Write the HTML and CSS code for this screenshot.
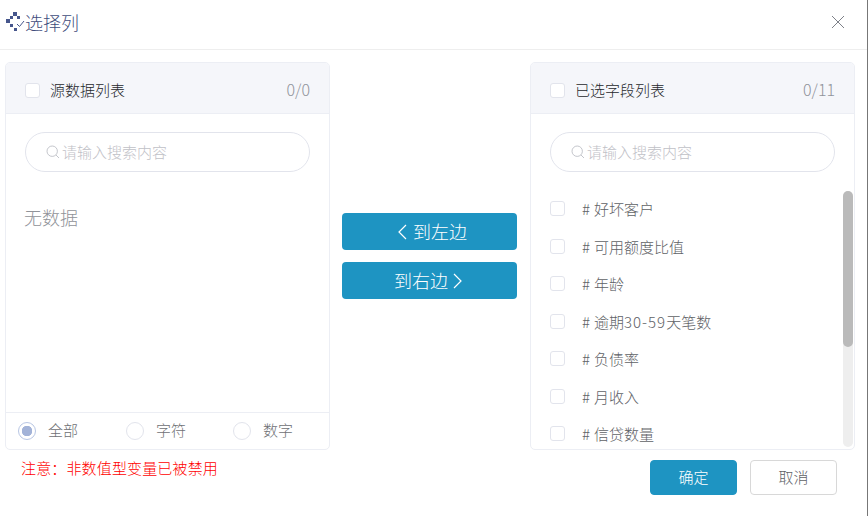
FILE: index.html
```html
<!DOCTYPE html>
<html lang="zh-CN">
<head>
<meta charset="utf-8">
<title>选择列</title>
<link rel="stylesheet" href="styles.css">
</head>
<body>
<div class="dialog">
  <header class="dialog-head">
    <h1 class="dialog-title">
      <svg class="title-icon" width="20" height="20" viewBox="6 14 20 20" aria-hidden="true">
        <g fill="#46568c" shape-rendering="crispEdges">
          <rect x="13" y="14" width="4" height="4"/>
          <rect x="6" y="21" width="4" height="4"/>
          <rect x="10" y="18" width="3" height="3"/>
          <rect x="17" y="18" width="3" height="3"/>
          <rect x="10" y="26" width="3" height="3"/>
          <rect x="14" y="30" width="3" height="3"/>
        </g>
        <path d="M17 26l2.500 2.500L24 23" fill="none" stroke="#46568c" stroke-width="1"/>
      </svg>
      <span class="title-text">选择列</span>
    </h1>
    <button class="close" aria-label="关闭">
      <svg width="14" height="14" viewBox="0 0 14 14"><path d="M1 1l12 12M13 1L1 13" stroke="#7d8088" stroke-width="1" fill="none"/></svg>
    </button>
  </header>

  <main class="transfer">
    <section class="panel">
      <div class="panel-head">
        <span class="check"></span>
        <span class="panel-name">源数据列表</span>
        <span class="count">0/0</span>
      </div>
      <div class="search-wrap">
        <div class="search">
          <svg width="14" height="14" viewBox="0 0 14 14"><circle cx="6.200" cy="6.200" r="5.200" fill="none" stroke="#c4c6cc"/><path d="M10 10l3 3" stroke="#c4c6cc"/></svg>
          <span class="search-text">请输入搜索内容</span>
        </div>
      </div>
      <div class="empty">无数据</div>
      <div class="radios">
        <label class="radio-item"><span class="radio on"></span><span class="radio-text">全部</span></label>
        <label class="radio-item"><span class="radio"></span><span class="radio-text">字符</span></label>
        <label class="radio-item"><span class="radio"></span><span class="radio-text">数字</span></label>
      </div>
    </section>

    <div class="actions">
      <button class="move to-left">
        <svg width="10" height="16" viewBox="0 0 10 16"><path d="M8 1L1 8l7 7" fill="none" stroke="#fff" stroke-width="1.200"/></svg>
        <span>到左边</span>
      </button>
      <button class="move to-right">
        <span>到右边</span>
        <svg width="10" height="16" viewBox="0 0 10 16"><path d="M1 1l7 7-7 7" fill="none" stroke="#fff" stroke-width="1.200"/></svg>
      </button>
    </div>

    <section class="panel">
      <div class="panel-head">
        <span class="check"></span>
        <span class="panel-name">已选字段列表</span>
        <span class="count">0/11</span>
      </div>
      <div class="search-wrap">
        <div class="search">
          <svg width="14" height="14" viewBox="0 0 14 14"><circle cx="6.200" cy="6.200" r="5.200" fill="none" stroke="#c4c6cc"/><path d="M10 10l3 3" stroke="#c4c6cc"/></svg>
          <span class="search-text">请输入搜索内容</span>
        </div>
      </div>
      <ul class="fields">
        <li class="field"><span class="check"></span><span class="hash">#</span><span>好坏客户</span></li>
        <li class="field"><span class="check"></span><span class="hash">#</span><span>可用额度比值</span></li>
        <li class="field"><span class="check"></span><span class="hash">#</span><span>年龄</span></li>
        <li class="field"><span class="check"></span><span class="hash">#</span><span>逾期<span class="num">30-59</span>天笔数</span></li>
        <li class="field"><span class="check"></span><span class="hash">#</span><span>负债率</span></li>
        <li class="field"><span class="check"></span><span class="hash">#</span><span>月收入</span></li>
        <li class="field"><span class="check"></span><span class="hash">#</span><span>信贷数量</span></li>
      </ul>
      <div class="scroll-track"><div class="scroll-thumb"></div></div>
    </section>
  </main>

  <footer class="dialog-foot">
    <p class="note">注意：非数值型变量已被禁用</p>
    <div class="foot-buttons">
      <button class="btn primary">确定</button>
      <button class="btn">取消</button>
    </div>
  </footer>
</div>
</body>
</html>
```
FILE: styles.css
```css
* { box-sizing: border-box; }
html, body { margin: 0; height: 100%; background: #fff; }
body {
  font-family: "Noto Sans CJK SC", "Liberation Sans", sans-serif;
  font-weight: 300;
  color: #606266;
  overflow: hidden;
}
.dialog {
  width: 868px;
  height: 516px;
  border-right: 1px solid #777;
  display: flex;
  flex-direction: column;
}
.dialog-head {
  height: 50px;
  border-bottom: 1px solid #eeeeee;
  display: flex;
  align-items: center;
  justify-content: space-between;
  padding: 0 22px 5px 6px;
  flex: none;
}
.dialog-title {
  margin: 0;
  display: flex;
  align-items: flex-start;
  font-size: 18px;
  line-height: 26px;
  font-weight: 300;
  color: #3f4d7c;
}
.title-icon { display: block; margin: 3px 0 0; }
.title-text { margin-left: -1px; }
.close {
  border: 0;
  background: none;
  padding: 0;
  width: 14px;
  height: 14px;
  display: block;
}
.close svg { display: block; }
.transfer {
  margin: 12px 0 0 5px;
  display: flex;
  height: 388px;
  flex: none;
}
.panel {
  position: relative;
  width: 325px;
  height: 388px;
  border: 1px solid #eceef4;
  border-radius: 5px;
  display: flex;
  flex-direction: column;
  overflow: hidden;
  flex: none;
}
.panel-head {
  height: 51px;
  background: #f5f6fa;
  border-bottom: 1px solid #eceef4;
  display: flex;
  align-items: center;
  padding: 2px 19px 0;
  font-size: 15px;
  flex: none;
}
.check {
  display: block;
  width: 15px;
  height: 15px;
  border: 1px solid #e2e4ec;
  border-radius: 3px;
  background: #fff;
  flex: none;
}
.panel-head .check { margin-top: 3px; }
.panel-name { margin-left: 10px; color: #26282c; }
.count { margin-left: auto; font-size: 16px; color: #90939a; }
.search-wrap { padding: 18px 19px 0; flex: none; }
.search {
  height: 40px;
  border: 1px solid #e2e4ec;
  border-radius: 20px;
  display: flex;
  align-items: center;
  padding-left: 20px;
  gap: 2px;
  font-size: 15px;
  color: #bfc1c7;
}
.search-text { margin-top: -2px; }
.empty {
  padding: 32px 0 0 18px;
  font-size: 18px;
  line-height: 26px;
  color: #909399;
  flex: 1;
}
.radios {
  height: 37px;
  border-top: 1px solid #eceef4;
  display: grid;
  grid-template-columns: 108px 107px auto;
  align-items: center;
  padding-left: 12px;
  font-size: 15px;
  color: #6e7074;
  flex: none;
}
.radio-item { display: flex; align-items: center; gap: 12px; }
.radio-text { margin-top: -3px; }
.radio {
  width: 18px;
  height: 18px;
  border: 1px solid #e2e4ec;
  border-radius: 50%;
  display: block;
  flex: none;
}
.radio.on {
  border-color: #b8c6e4;
  background: radial-gradient(circle, #a3b3d8 0 5px, #fff 5.500px);
}
.actions {
  width: 200px;
  flex: none;
  display: flex;
  flex-direction: column;
  justify-content: center;
  align-items: center;
  gap: 12px;
  padding-right: 1px;
}
.move {
  width: 175px;
  height: 37px;
  border: 0;
  border-radius: 4px;
  background: #1e94c2;
  color: #fff;
  font: inherit;
  font-size: 18px;
  display: flex;
  align-items: center;
  justify-content: center;
  gap: 5px;
  padding: 0 0 2px;
}
.move svg { margin-top: 2px; }
.to-left { padding-left: 6px; }
.to-right { padding-right: 2px; }
.fields {
  list-style: none;
  margin: 0;
  padding: 18px 0 0 19px;
  flex: 1;
  overflow: hidden;
}
.field {
  height: 37.500px;
  display: flex;
  align-items: center;
  font-size: 15px;
  color: #606266;
}
.hash { margin-left: 17px; margin-right: 4px; }
.num { letter-spacing: 1px; }
.scroll-track {
  position: absolute;
  right: 1px;
  top: 128px;
  width: 10px;
  height: 256px;
  background: #eeeeee;
  border-radius: 5px;
}
.scroll-thumb {
  height: 156px;
  background: #bababa;
  border-radius: 5px;
}
.dialog-foot {
  display: flex;
  justify-content: space-between;
  padding: 10px 30px 0 21px;
}
.note {
  margin: 0;
  font-size: 15px;
  line-height: 16px;
  letter-spacing: 0.150px;
  color: #ff0000;
}
.foot-buttons { display: flex; gap: 13px; }
.btn {
  width: 87px;
  height: 35px;
  border: 1px solid #d8d8d8;
  border-radius: 4px;
  background: #fff;
  color: #606266;
  font: inherit;
  font-size: 15px;
  padding: 0 0 2px;
}
.btn.primary { background: #1e94c2; border-color: #1e94c2; color: #fff; }
```
